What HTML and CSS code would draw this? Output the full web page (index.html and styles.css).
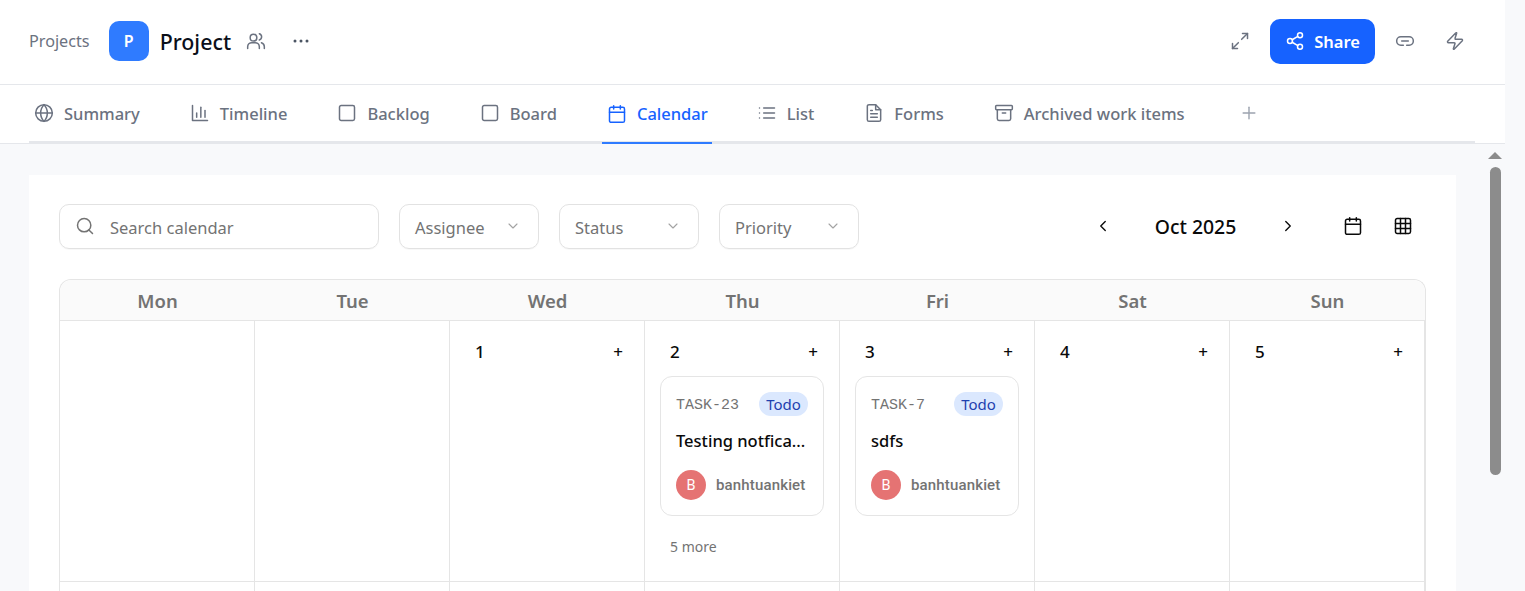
FILE: index.html
```html
<!DOCTYPE html>
<html>
<head>
	<meta charset="utf-8" />
	<title>Project - Calendar</title>
	<link rel="stylesheet" href="styles.css">
</head>
<body>
	<div class="app">
		<header class="topbar">
			<span class="crumb">Projects</span>
			<span class="project-logo">P</span>
			<span class="project-name">Project</span>
			<svg class="icon top-people" viewBox="0 0 24 24"><circle cx="9" cy="8" r="4"/><path d="M2 21v-2a5 5 0 0 1 5-5h4a5 5 0 0 1 5 5v2"/><path d="M16 3.2a4 4 0 0 1 0 7.6"/><path d="M22 21v-2a5 5 0 0 0-3.5-4.8"/></svg>
			<svg class="top-more" viewBox="0 0 16 4"><circle cx="2" cy="2" r="1.5"/><circle cx="8" cy="2" r="1.5"/><circle cx="14" cy="2" r="1.5"/></svg>
			<div class="top-actions">
				<svg class="icon" viewBox="0 0 24 24"><path d="M14 10l7-7"/><path d="M15 3h6v6"/><path d="M10 14l-7 7"/><path d="M3 15v6h6"/></svg>
				<button class="share-btn" type="button">
					<svg class="icon" viewBox="0 0 24 24"><circle cx="18" cy="5" r="3"/><circle cx="6" cy="12" r="3"/><circle cx="18" cy="19" r="3"/><path d="M8.6 10.500l6.800-4"/><path d="M8.600 13.500l6.800 4"/></svg>
					Share
				</button>
				<svg class="icon" viewBox="0 0 24 24"><path d="M10 17H7A5 5 0 0 1 7 7h10a5 5 0 0 1 0 10h-3"/><path d="M8 12h8"/></svg>
				<svg class="icon bolt" viewBox="0 0 24 24"><path d="M4 14a1 1 0 0 1-.78-1.630l9.900-10.200a.5.5 0 0 1 .86.46l-1.920 6.020A1 1 0 0 0 13 10h7a1 1 0 0 1 .78 1.630l-9.900 10.200a.5.5 0 0 1-.86-.46l1.920-6.020A1 1 0 0 0 11 14z"/></svg>
			</div>
		</header>

		<nav class="tabs">
			<a class="tab"><svg class="icon" viewBox="0 0 24 24"><circle cx="12" cy="12" r="10"/><path d="M2 12h20"/><path d="M12 2c3 3 4 6.500 4 10s-1 7-4 10c-3-3-4-6.500-4-10s1-7 4-10z"/></svg>Summary</a>
			<a class="tab"><svg class="icon" viewBox="0 0 24 24"><path d="M3 3v18h18"/><path d="M8 17v-5"/><path d="M13 17V5"/><path d="M18 17v-8"/></svg>Timeline</a>
			<a class="tab"><svg class="icon" viewBox="0 0 24 24"><rect x="3" y="3" width="18" height="18" rx="2"/></svg>Backlog</a>
			<a class="tab"><svg class="icon" viewBox="0 0 24 24"><rect x="3" y="3" width="18" height="18" rx="2"/></svg>Board</a>
			<a class="tab active"><svg class="icon" viewBox="0 0 24 24"><rect x="3" y="4" width="18" height="18" rx="2"/><path d="M3 10h18"/><path d="M8 2v4"/><path d="M16 2v4"/></svg>Calendar</a>
			<a class="tab"><svg class="icon" viewBox="0 0 24 24"><path d="M8 6h13"/><path d="M8 12h13"/><path d="M8 18h13"/><path d="M3 6h.01"/><path d="M3 12h.01"/><path d="M3 18h.01"/></svg>List</a>
			<a class="tab"><svg class="icon" viewBox="0 0 24 24"><path d="M14 2H6a2 2 0 0 0-2 2v16a2 2 0 0 0 2 2h12a2 2 0 0 0 2-2V8z"/><path d="M14 2v6h6"/><path d="M8 13h8"/><path d="M8 17h8"/><path d="M8 9h2"/></svg>Forms</a>
			<a class="tab"><svg class="icon" viewBox="0 0 24 24"><rect x="2" y="3" width="20" height="5" rx="1"/><path d="M4 8v11a2 2 0 0 0 2 2h12a2 2 0 0 0 2-2V8"/><path d="M10 12h4"/></svg>Archived work items</a>
			<svg class="tab-add" viewBox="0 0 24 24"><path d="M12 5v14"/><path d="M5 12h14"/></svg>
		</nav>

		<div class="body-row">
			<main class="content">
				<section class="panel">
					<div class="filters">
						<div class="search">
							<svg class="icon" viewBox="0 0 24 24"><circle cx="11" cy="11" r="8"/><path d="M21 21l-4.300-4.300"/></svg>
							Search calendar
						</div>
						<div class="select">Assignee<svg class="chev" viewBox="0 0 24 24"><path d="M6 9l6 6 6-6"/></svg></div>
						<div class="select">Status<svg class="chev" viewBox="0 0 24 24"><path d="M6 9l6 6 6-6"/></svg></div>
						<div class="select">Priority<svg class="chev" viewBox="0 0 24 24"><path d="M6 9l6 6 6-6"/></svg></div>
						<div class="month-nav">
							<svg class="icon nav-arrow" viewBox="0 0 24 24"><path d="M15 18l-6-6 6-6"/></svg>
							<span class="month-label">Oct 2025</span>
							<svg class="icon nav-arrow" viewBox="0 0 24 24"><path d="M9 18l6-6-6-6"/></svg>
							<svg class="icon view-cal" viewBox="0 0 24 24"><rect x="3" y="4" width="18" height="18" rx="2"/><path d="M3 10h18"/><path d="M8 2v4"/><path d="M16 2v4"/></svg>
							<svg class="icon view-grid" viewBox="0 0 24 24"><rect x="3" y="3" width="18" height="18" rx="2"/><path d="M3 9h18"/><path d="M3 15h18"/><path d="M9 3v18"/><path d="M15 3v18"/></svg>
						</div>
					</div>

					<div class="calendar">
						<div class="dow">Mon</div>
						<div class="dow">Tue</div>
						<div class="dow">Wed</div>
						<div class="dow">Thu</div>
						<div class="dow">Fri</div>
						<div class="dow">Sat</div>
						<div class="dow">Sun</div>

						<div class="day"></div>
						<div class="day"></div>
						<div class="day"><div class="day-head"><span>1</span><span class="day-add">+</span></div></div>
						<div class="day">
							<div class="day-head"><span>2</span><span class="day-add">+</span></div>
							<div class="card">
								<div class="card-top"><span class="task-id">TASK-23</span><span class="badge">Todo</span></div>
								<div class="card-title">Testing notfica...</div>
								<div class="card-user"><span class="avatar">B</span><span class="user-name">banhtuankiet</span></div>
							</div>
							<div class="more">5 more</div>
						</div>
						<div class="day">
							<div class="day-head"><span>3</span><span class="day-add">+</span></div>
							<div class="card">
								<div class="card-top"><span class="task-id">TASK-7</span><span class="badge">Todo</span></div>
								<div class="card-title">sdfs</div>
								<div class="card-user"><span class="avatar">B</span><span class="user-name">banhtuankiet</span></div>
							</div>
						</div>
						<div class="day"><div class="day-head"><span>4</span><span class="day-add">+</span></div></div>
						<div class="day"><div class="day-head"><span>5</span><span class="day-add">+</span></div></div>

						<div class="day"></div>
						<div class="day"></div>
						<div class="day"></div>
						<div class="day"></div>
						<div class="day"></div>
						<div class="day"></div>
						<div class="day"></div>
					</div>
				</section>
			</main>
			<div class="scrollbar">
				<span class="scroll-up"></span>
				<span class="scroll-thumb"></span>
			</div>
		</div>
	</div>
</body>
</html>
```

FILE: styles.css
```css
html,
body {
	margin: 0;
	padding: 0;
	height: 591px;
	overflow: hidden;
	background-color: #f8f9fb;
	font-family: "Noto Sans", sans-serif;
}

.app {
	width: 1505px;
	height: 591px;
	display: flex;
	flex-direction: column;
	overflow: hidden;
}

.icon {
	width: 20px;
	height: 20px;
	fill: none;
	stroke: currentColor;
	stroke-width: 1.8;
	stroke-linecap: round;
	stroke-linejoin: round;
	flex: none;
}

/* Top bar */
.topbar {
	height: 85px;
	flex: none;
	display: flex;
	align-items: center;
	padding: 0 40px 2px 29px;
	box-sizing: border-box;
	background-color: #fff;
	border-bottom: 1px solid #e5e7eb;
	color: #6b7280;
}

.crumb {
	font-size: 16.2px;
	margin-right: 19px;
}

.project-logo {
	width: 40px;
	height: 40px;
	border-radius: 10px;
	background-color: #2f7bff;
	color: #fff;
	font-size: 16px;
	font-weight: 600;
	display: flex;
	align-items: center;
	justify-content: center;
	margin-right: 11px;
}

.project-name {
	font-size: 21.4px;
	font-weight: 500;
	color: #0b0f19;
	margin-right: 15px;
}

.top-more {
	width: 16px;
	height: 4px;
	fill: #4b5563;
	margin-left: 27px;
}

.top-actions {
	margin-left: auto;
	display: flex;
	align-items: center;
	gap: 20px;
}

.bolt {
	margin-left: 10px;
}

.share-btn {
	width: 105px;
	height: 45px;
	margin: 0;
	padding: 0;
	border: 0;
	border-radius: 10px;
	background-color: #1662ff;
	color: #fff;
	font-family: inherit;
	font-size: 16.5px;
	font-weight: 600;
	display: flex;
	align-items: center;
	justify-content: center;
	gap: 9px;
}

/* Tabs */
.tabs {
	height: 59px;
	flex: none;
	box-sizing: border-box;
	background-color: #fff;
	border-bottom: 1px solid #e5e7eb;
	display: flex;
	align-items: stretch;
	position: relative;
	padding-left: 29px;
}

.tabs::after {
	content: "";
	position: absolute;
	left: 29px;
	width: 1446px;
	bottom: 0;
	height: 2px;
	background-color: #e5e7eb;
}

.tab {
	display: flex;
	align-items: center;
	gap: 10px;
	padding: 0 5px 2px 5px;
	margin-right: 40px;
	font-size: 16.5px;
	font-weight: 500;
	color: #6b7280;
	position: relative;
	z-index: 1;
}

.tab.active {
	color: #1662ff;
	border-bottom: 2px solid #2f7bff;
	padding-right: 4px;
	padding-bottom: 0;
	height: 57px;
}

.tab-add {
	width: 20px;
	height: 20px;
	margin: 18px 0 0 9px;
	fill: none;
	stroke: #9ca3af;
	stroke-width: 1.7;
	stroke-linecap: round;
}

/* Content */
.body-row {
	flex: 1;
	display: flex;
	min-height: 0;
}

.content {
	flex: 1;
	padding: 31px 29px 0 29px;
	overflow: hidden;
}

.panel {
	background-color: #fff;
	padding: 29px 30px 0 30px;
	height: 500px;
	box-sizing: border-box;
}

.scrollbar {
	width: 20px;
	flex: none;
	display: flex;
	flex-direction: column;
	align-items: center;
	box-sizing: border-box;
}

.scroll-up {
	width: 0;
	height: 0;
	margin-top: 8px;
	border-left: 7px solid transparent;
	border-right: 7px solid transparent;
	border-bottom: 7px solid #8c8c8c;
}

.scroll-thumb {
	width: 11px;
	height: 308px;
	margin-top: 8px;
	border-radius: 6px;
	background-color: #8c8c8c;
}

/* Filters */
.filters {
	display: flex;
	align-items: center;
	gap: 20px;
	margin-bottom: 30px;
}

.search,
.select {
	height: 45px;
	box-sizing: border-box;
	border: 1px solid #e2e2e2;
	border-radius: 10px;
	display: flex;
	align-items: center;
	padding-top: 2px;
	font-size: 16.5px;
	color: #737373;
	box-shadow: 0 1px 1px rgba(0, 0, 0, 0.03);
}

.search {
	width: 320px;
	padding-left: 15px;
	gap: 15px;
}

.search .icon {
	margin-top: -4px;
}

.select {
	width: 140px;
	padding-left: 15px;
	padding-right: 17px;
	justify-content: space-between;
}

.chev {
	width: 16px;
	height: 16px;
	margin-top: -4px;
	fill: none;
	stroke: #a3a3a3;
	stroke-width: 1.7;
	stroke-linecap: round;
	stroke-linejoin: round;
}

.month-nav {
	margin-left: auto;
	display: flex;
	align-items: center;
	color: #0a0a0a;
	padding-right: 13px;
}

.month-nav .icon {
	margin-top: -2px;
}

.month-label {
	font-size: 19.4px;
	font-weight: 500;
	width: 167px;
	text-align: center;
}

.nav-arrow {
	width: 18px;
	height: 18px;
}

.view-cal {
	margin-left: 46px;
}

.view-grid {
	margin-left: 30px;
}

/* Calendar grid */
.calendar {
	display: grid;
	grid-template-columns: repeat(7, 195px);
	grid-auto-rows: 261px;
	grid-template-rows: 41px 261px;
	width: 1367px;
	box-sizing: border-box;
	border: 1px solid #e5e5e5;
	border-bottom: 0;
	border-radius: 12px 12px 0 0;
}

.dow {
	background-color: #fafafa;
	border-bottom: 1px solid #e5e5e5;
	display: flex;
	align-items: center;
	justify-content: center;
	font-size: 18.5px;
	font-weight: 600;
	color: #737373;
}

.dow:first-child {
	border-top-left-radius: 12px;
}

.dow:nth-child(7) {
	border-top-right-radius: 12px;
}

.day {
	box-sizing: border-box;
	border-right: 1px solid #e5e5e5;
	border-bottom: 1px solid #e5e5e5;
	padding: 15px 15px 0 15px;
}

.day-head {
	display: flex;
	justify-content: space-between;
	align-items: center;
	height: 30px;
	padding: 0 6px 0 10px;
	font-size: 17px;
	font-weight: 500;
	color: #0a0a0a;
}

.day-add {
	font-size: 17px;
}

.card {
	width: 164px;
	height: 140px;
	box-sizing: border-box;
	margin: 10px 0 0 0;
	padding: 15px;
	border: 1px solid #e5e5e5;
	border-radius: 12px;
	background-color: #fff;
}

.card-top {
	display: flex;
	align-items: center;
	justify-content: space-between;
	height: 24px;
}

.task-id {
	font-family: "Liberation Mono", monospace;
	font-size: 15px;
	color: #737373;
	margin-top: 2px;
}

.badge {
	width: 49px;
	height: 24px;
	box-sizing: border-box;
	text-align: center;
	border-radius: 12px;
	background-color: #dbe8fe;
	color: #1e40af;
	font-size: 15px;
	line-height: 24px;
	font-weight: 400;
}

.card-title {
	margin-top: 13px;
	font-size: 16.5px;
	font-weight: 500;
	line-height: 24px;
	color: #0a0a0a;
	white-space: nowrap;
}

.card-user {
	display: flex;
	align-items: center;
	gap: 10px;
	margin-top: 17px;
}

.avatar {
	width: 30px;
	height: 30px;
	border-radius: 50%;
	background-color: #e57373;
	color: #fff;
	font-size: 14.5px;
	display: flex;
	align-items: center;
	justify-content: center;
	font-family: Roboto, sans-serif;
}

.user-name {
	font-family: Roboto, sans-serif;
	font-size: 15px;
	font-weight: 500;
	color: #737373;
	letter-spacing: 0.15px;
}

.more {
	margin: 21px 0 0 10px;
	font-size: 14px;
	color: #737373;
}
```
